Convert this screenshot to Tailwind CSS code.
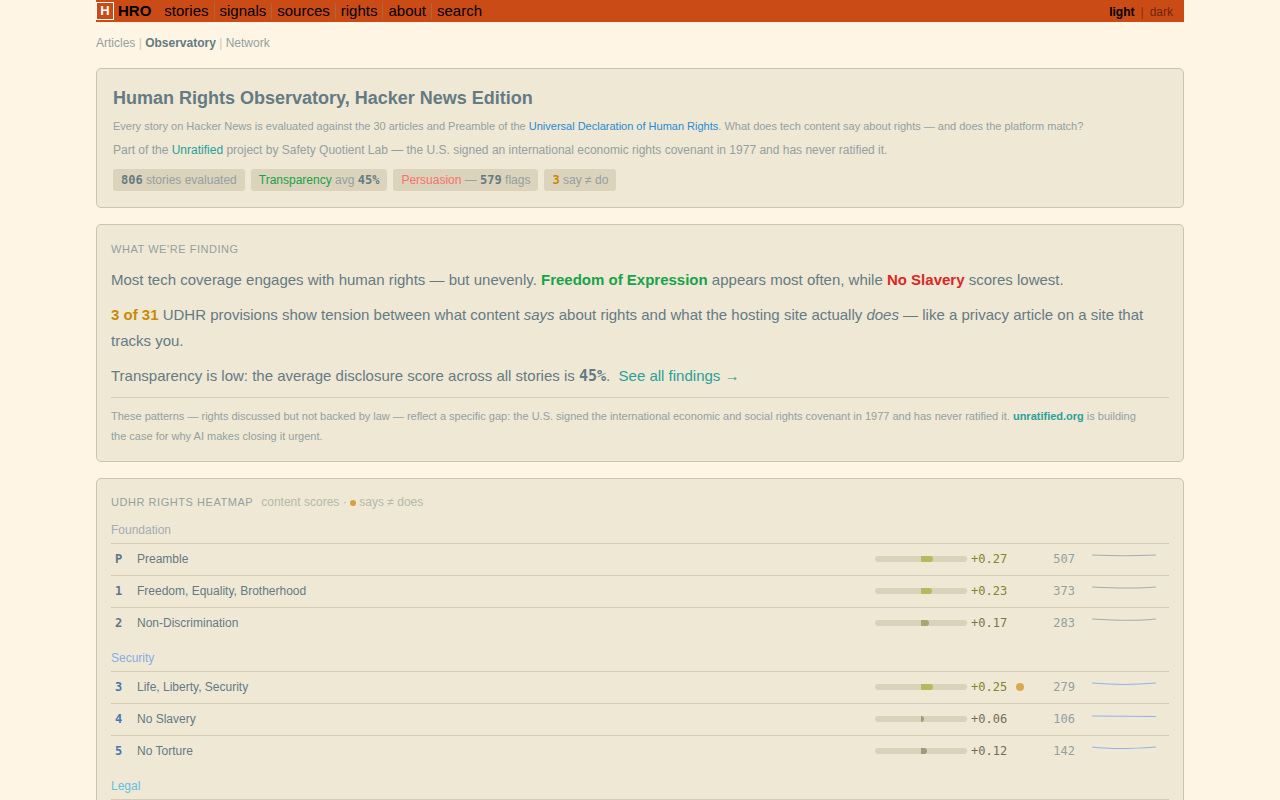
<!DOCTYPE html>
<html lang="en">
<head>
<meta charset="utf-8">
<meta name="viewport" content="width=device-width, initial-scale=1">
<title>Human Rights Observatory</title>
<script src="https://cdn.jsdelivr.net/npm/@tailwindcss/browser@4"></script>
</head>
<body class="bg-[#fef5e4] font-['Liberation_Sans',Arial,sans-serif] text-xs leading-[18px] text-[#93a1a1]">
<div class="mx-auto w-[85%]">
  <header class="flex h-[22px] items-center bg-[#cb4b16] text-black">
    <a href="#" class="flex items-center gap-1 text-[15px] font-bold">
      <span class="flex size-[18px] items-center justify-center border border-white text-[13px] text-white">H</span>HRO
    </a>
    <nav class="ml-[13px] flex items-center gap-[5px] text-[15px]">
      <a href="#">stories</a><span class="h-4 w-px bg-[#a8694a]"></span>
      <a href="#">signals</a><span class="h-4 w-px bg-[#a8694a]"></span>
      <a href="#">sources</a><span class="h-4 w-px bg-[#a8694a]"></span>
      <a href="#">rights</a><span class="h-4 w-px bg-[#a8694a]"></span>
      <a href="#">about</a><span class="h-4 w-px bg-[#a8694a]"></span>
      <a href="#">search</a>
    </nav>
    <div class="mr-[11px] ml-auto flex gap-[6px] pt-[2px]">
      <button type="button" class="font-bold">light</button><span class="text-black/40">|</span><button type="button" class="text-black/50">dark</button>
    </div>
  </header>

  <nav class="mt-3 text-[#93a1a1]"><a href="#">Articles</a> <span class="text-[#cfc9b4]">|</span> <a href="#" class="font-bold text-[#657b83]">Observatory</a> <span class="text-[#cfc9b4]">|</span> <a href="#">Network</a></nav>

  <main class="mt-4 flex flex-col gap-4">
    <section class="rounded-[5px] border border-[#cbc5b0] bg-[#eee8d5] p-4">
      <h1 class="pt-px text-lg leading-6 font-bold text-[#657b83]">Human Rights Observatory, Hacker News Edition</h1>
      <p class="mt-[6px] text-[11px] leading-5">Every story on Hacker News is evaluated against the 30 articles and Preamble of the <a href="#" class="text-[#268bd2]">Universal Declaration of Human Rights</a>. What does tech content say about rights — and does the platform match?</p>
      <p class="mt-1 leading-5">Part of the <a href="#" class="text-[#2aa198]">Unratified</a> project by Safety Quotient Lab — the U.S. signed an international economic rights covenant in 1977 and has never ratified it.</p>
      <ul class="mt-[9px] flex flex-wrap gap-[6px]">
        <li class="rounded-[3px] bg-[#dbd3bb] px-2 py-[2px]"><b class="font-['DejaVu_Sans_Mono',monospace] text-[#657b83]">806</b> stories evaluated</li>
        <li class="rounded-[3px] bg-[#dbd3bb] px-2 py-[2px]"><span class="text-[#16a34a]">Transparency</span> avg <b class="font-['DejaVu_Sans_Mono',monospace] text-[#657b83]">45%</b></li>
        <li class="rounded-[3px] bg-[#dbd3bb] px-2 py-[2px]"><span class="text-[#f87171]">Persuasion</span> — <b class="font-['DejaVu_Sans_Mono',monospace] text-[#657b83]">579</b> flags</li>
        <li class="rounded-[3px] bg-[#dbd3bb] px-2 py-[2px]"><b class="font-['DejaVu_Sans_Mono',monospace] text-[#ca8a04]">3</b> say ≠ do</li>
      </ul>
    </section>

    <section class="rounded-[5px] border border-[#cbc5b0] bg-[#eee8d5] p-[14px]">
      <h2 class="text-[11px] leading-5 tracking-wider uppercase">What we're finding</h2>
      <div class="mt-2 flex flex-col gap-[9px] text-[15px] leading-[26px] text-[#657b83]">
        <p>Most tech coverage engages with human rights — but unevenly. <b class="text-[#16a34a]">Freedom of Expression</b> appears most often, while <b class="text-[#dc2626]">No Slavery</b> scores lowest.</p>
        <p><b class="text-[#ca8a04]">3 of 31</b> UDHR provisions show tension between what content <em>says</em> about rights and what the hosting site actually <em>does</em> — like a privacy article on a site that tracks you.</p>
        <p>Transparency is low: the average disclosure score across all stories is <b class="font-['DejaVu_Sans_Mono',monospace]">45%</b>.&nbsp; <a href="#" class="text-[#2aa198]">See all findings →</a></p>
      </div>
      <p class="mt-2 border-t border-[#d5cdb8] pt-2 pb-px text-[11px] leading-5">These patterns — rights discussed but not backed by law — reflect a specific gap: the U.S. signed the international economic and social rights covenant in 1977 and has never ratified it. <a href="#" class="font-bold text-[#2aa198]">unratified.org</a> is building the&nbsp;case for why AI makes closing it urgent.</p>
    </section>

    <section class="rounded-[5px] border border-[#cbc5b0] bg-[#eee8d5] p-[14px]">
      <div class="flex items-center gap-2">
        <h2 class="text-[11px] tracking-wider uppercase">UDHR Rights Heatmap</h2>
        <p class="text-[#b5b9aa]">content scores · <span class="inline-block size-[6px] rounded-full bg-[#d6a33a]"></span> says ≠ does</p>
      </div>
      <table class="w-full table-fixed border-collapse text-left">
        <colgroup><col class="w-[26px]"><col><col class="w-[96px]"><col class="w-[40px]"><col class="w-[14px]"><col class="w-[50px]"><col class="w-[94px]"></colgroup>
        <tbody id="rows"></tbody>
      </table>
    </section>
  </main>
</div>
<script>
const groups = [
  { name: 'Foundation', tint: 'text-[#a5adb0]', code: 'text-[#64748b]', line: '#9fb0b4', rows: [
    ['P', 'Preamble', .27, 507, 'M0 6 Q32 7.5 64 6'],
    ['1', 'Freedom, Equality, Brotherhood', .23, 373, 'M0 6 Q40 8 64 6'],
    ['2', 'Non-Discrimination', .17, 283, 'M0 6 Q42 8.5 64 6'] ] },
  { name: 'Security', tint: 'text-[#85aee4]', code: 'text-[#4878b0]', line: '#8db4e6', rows: [
    ['3', 'Life, Liberty, Security', .25, 279, 'M0 6 Q32 9 64 6', true],
    ['4', 'No Slavery', .06, 106, 'M0 7 L64 7.5'],
    ['5', 'No Torture', .12, 142, 'M0 6 Q24 9 64 6'] ] },
  { name: 'Legal', tint: 'text-[#62bfe6]', rows: [] }
];
const tone = s => s >= .2 ? ['bg-[#b4bb5e]', 'text-[#848430]'] : s > .15 ? ['bg-[#a8a670]', 'text-[#7b7749]'] : ['bg-[#a09a7d]', 'text-[#746e58]'];
document.getElementById('rows').innerHTML = groups.map(g =>
  `<tr class="h-8 border-b border-[#d5cdb8]"><th colspan="7" scope="colgroup" class="pt-[10px] pb-[3px] font-normal ${g.tint}">${g.name}</th></tr>` +
  g.rows.map(([c, n, s, k, d, dot], i) => {
    const [bar, txt] = tone(s);
    return `<tr class="h-8 ${i < g.rows.length - 1 ? 'border-b border-[#d5cdb8]' : ''}">
      <td class="pl-1 font-['DejaVu_Sans_Mono',monospace] font-bold ${g.code}">${c}</td>
      <th scope="row" class="font-normal text-[#657b83]">${n}</th>
      <td class="pr-1"><div class="h-[6px] rounded-[3px] bg-[#dad3bc]"><div class="ml-[50%] h-full rounded-r-[3px] ${bar}" style="width:${s * 50}%"></div></div></td>
      <td class="font-['DejaVu_Sans_Mono',monospace] ${txt}">+${s.toFixed(2)}</td>
      <td>${dot ? '<span class="ml-[5px] block size-2 rounded-full bg-[#d8a950]"></span>' : ''}</td>
      <td class="text-right font-['DejaVu_Sans_Mono',monospace]">${k}</td>
      <td class="pl-[17px]"><svg width="64" height="20" viewBox="0 0 64 20" fill="none" stroke="${g.line}" stroke-width="1.2"><path d="${d}"/></svg></td>
    </tr>`;
  }).join('')).join('');
</script>
</body>
</html>
